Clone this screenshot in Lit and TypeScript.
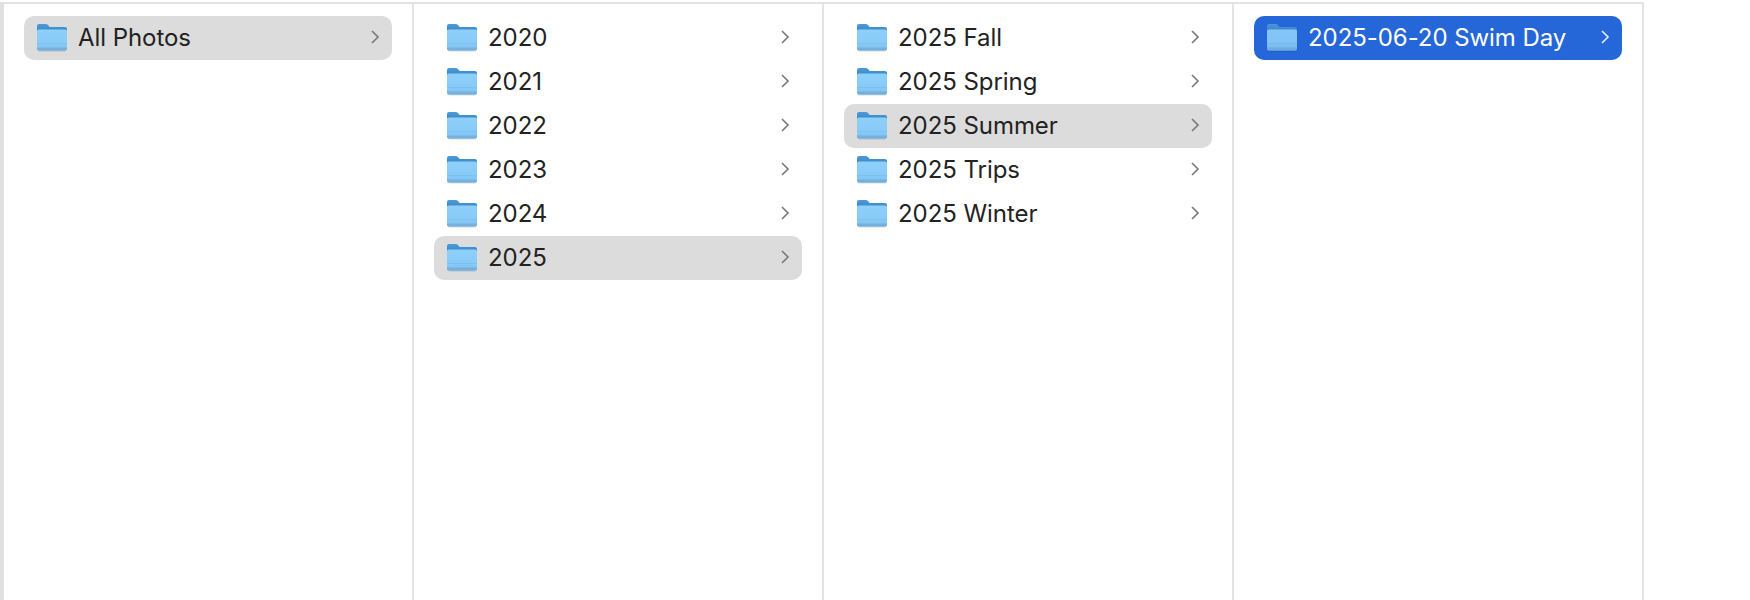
import { LitElement, css, html } from 'lit';
import { customElement } from 'lit/decorators.js';

type Row = { name: string; state?: 'open' | 'selected' };

const columns: Row[][] = [
  [{ name: 'All Photos', state: 'open' }],
  [
    { name: '2020' },
    { name: '2021' },
    { name: '2022' },
    { name: '2023' },
    { name: '2024' },
    { name: '2025', state: 'open' },
  ],
  [
    { name: '2025 Fall' },
    { name: '2025 Spring' },
    { name: '2025 Summer', state: 'open' },
    { name: '2025 Trips' },
    { name: '2025 Winter' },
  ],
  [{ name: '2025-06-20 Swim Day', state: 'selected' }],
];

const folder = html`<svg class="folder" width="30" height="28" viewBox="0 0 30 28">
  <defs>
    <linearGradient id="back" x1="0" y1="0" x2="0" y2="1">
      <stop offset="0" stop-color="#4c9ad8" />
      <stop offset="1" stop-color="#357fbe" />
    </linearGradient>
    <linearGradient id="front" x1="0" y1="0" x2="0" y2="1">
      <stop offset="0" stop-color="#8fd0fa" />
      <stop offset="0.7" stop-color="#86caf8" />
      <stop offset="1" stop-color="#7fbeed" />
    </linearGradient>
  </defs>
  <path d="M0.5 24 H29.5 V25.5 Q29.5 27.5 27.5 27.5 H2.5 Q0.5 27.5 0.5 25.5 Z" fill="#000" opacity="0.14" />
  <path d="M0 2 Q0 0 2 0 H9 Q10.5 0 11.5 1.5 L12.5 3 H28 Q30 3 30 5 V11 H0 Z" fill="url(#back)" />
  <path d="M0 7 Q0 5.5 2 5.5 H28 Q30 5.5 30 7 V24.5 Q30 26.5 28 26.5 H2 Q0 26.5 0 24.5 Z" fill="url(#front)" />
  <rect x="0" y="19" width="30" height="1" fill="#7fc0ee" />
  <path d="M0 23.5 V24.5 Q0 26.5 2 26.5 H28 Q30 26.5 30 24.5 V23.5 Z" fill="#76b0de" />
</svg>`;

@customElement('app-root')
export class AppRoot extends LitElement {
  static styles = css`
    :host {
      display: block;
      font-family: Inter, 'Liberation Sans', sans-serif;
    }
    .browser {
      display: flex;
      width: 1644px;
      height: 600px;
      box-sizing: border-box;
      margin-top: 2px;
      border-top: 2px solid #e3e3e3;
      border-left: 4px solid #e0e0e0;
    }
    .column {
      width: 410px;
      box-sizing: border-box;
      flex: none;
      padding: 12px 20px 0;
      border-right: 2px solid #e3e3e3;
    }
    .row {
      display: flex;
      align-items: center;
      height: 44px;
      width: 368px;
      box-sizing: border-box;
      padding: 0 12px 0 13px;
      border-radius: 10px;
      font-size: 24px;
      letter-spacing: -0.06px;
      color: #222;
    }
    .row.open {
      background: #dcdcdc;
    }
    .row.selected {
      background: #2566d9;
      color: #fff;
    }
    .folder {
      flex: none;
      margin-right: 12px;
    }
    .name {
      flex: 1;
      white-space: nowrap;
      margin-left: -1px;
      padding-bottom: 2px;
    }
    .chevron {
      flex: none;
      margin-bottom: 2px;
      fill: none;
      stroke: #777;
      stroke-width: 1.6;
    }
    .selected .chevron {
      stroke: #e8effc;
    }
    .selected .folder {
      opacity: 0.92;
    }
  `;

  render() {
    return html`<div class="browser">
      ${columns.map(
        (rows) => html`<div class="column">
          ${rows.map(
            (r) => html`<div class="row ${r.state ?? ''}">
              ${folder}
              <span class="name">${r.name}</span>
              <svg class="chevron" width="10" height="16" viewBox="0 0 10 16">
                <path d="M2 2 L8 8 L2 14" />
              </svg>
            </div>`
          )}
        </div>`
      )}
    </div>`;
  }
}
